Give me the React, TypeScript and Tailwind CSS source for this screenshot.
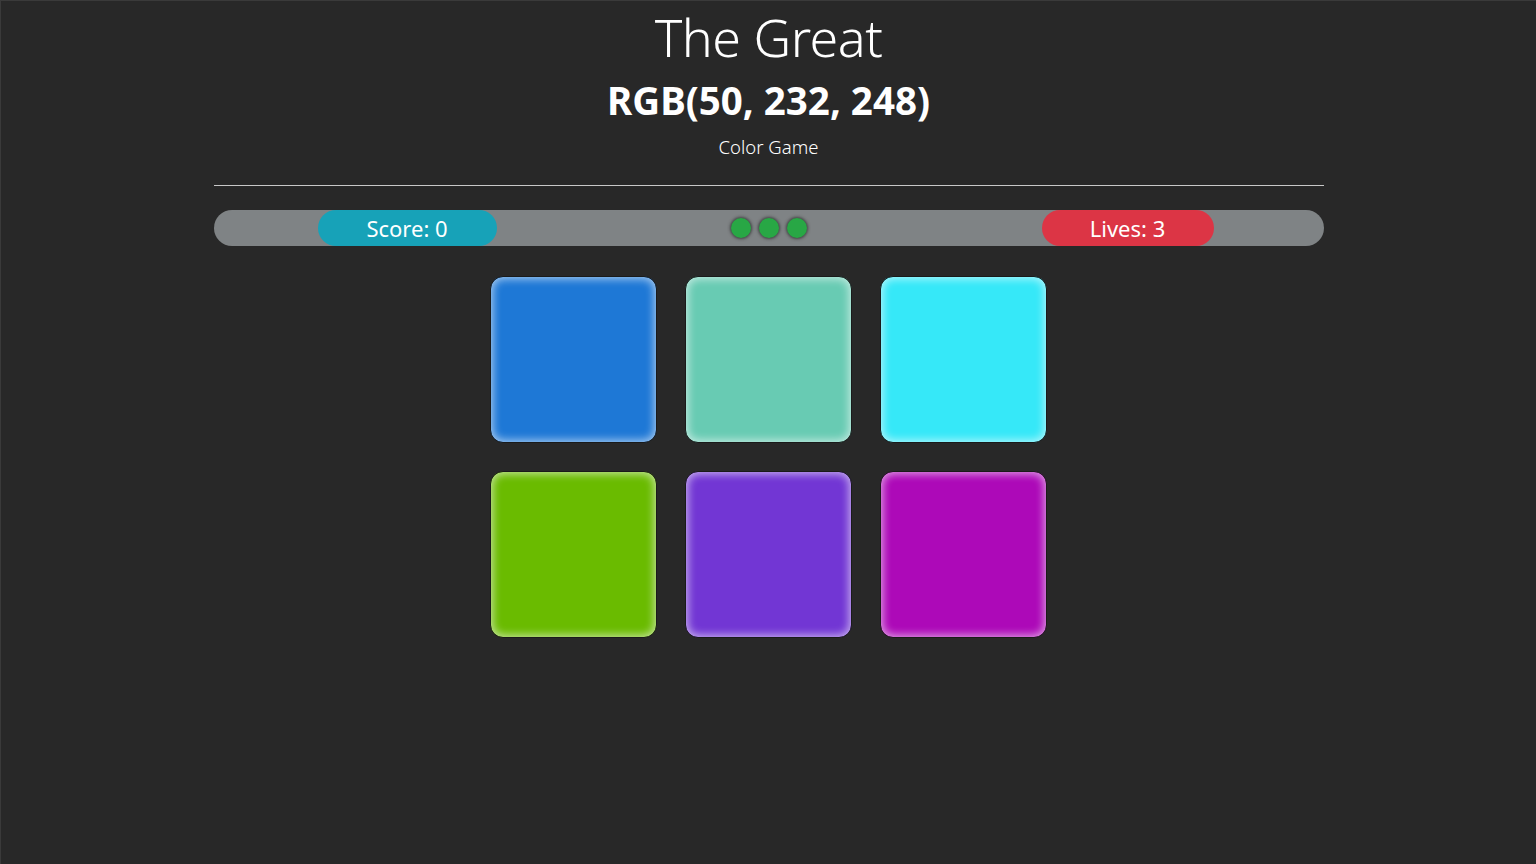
import React from 'react';

const tiles = [
  '#1e78d6',
  '#68cbb3',
  '#36e8f8',
  '#6abb00',
  '#7236d4',
  '#ad09b8',
];

export default function App() {
  return (
    <div
      className="min-h-[864px] w-full bg-[#282828] text-white border-t border-l border-[#3a3a3a]"
      style={{ fontFamily: '"Noto Sans", "Open Sans", sans-serif' }}
    >
      {/* Header */}
      <div className="flex flex-col items-center">
        <h1 className="mt-[0px] text-[52px] leading-[72px] font-light tracking-[-0.5px]">The Great</h1>
        <h2 className="mt-[-1px] text-[38.5px] leading-[56px] font-bold">RGB(50, 232, 248)</h2>
        <p className="mt-[6px] text-[18.5px] leading-[26px] font-light">Color Game</p>
      </div>

      <div className="mx-auto w-[1110px]">
        <hr className="mt-[25px] border-t border-[#c8c8c8]" />

        {/* Status bar */}
        <div className="mt-[24px] h-[36px] rounded-full bg-[#7f8385] grid grid-cols-3 items-center">
          <div className="flex">
            <div className="ml-[104px] w-[179px] h-[36px] rounded-full bg-[#17a2b8] flex items-center justify-center text-[22px]">
              Score: 0
            </div>
          </div>
          <div className="flex justify-center gap-[8px]">
            {[0, 1, 2].map((i) => (
              <span
                key={i}
                className="w-[20px] h-[20px] rounded-full bg-[#28a745] shadow-[0_0_3px_1px_rgba(40,40,40,0.7)]"
              />
            ))}
          </div>
          <div className="flex">
            <div className="ml-[88px] w-[172px] h-[36px] rounded-full bg-[#dc3545] flex items-center justify-center text-[22px]">
              Lives: 3
            </div>
          </div>
        </div>

        {/* Tiles */}
        <div className="mt-[30px] grid grid-cols-[167px_167px_167px] justify-center gap-[28px]">
          {tiles.map((c) => (
            <div
              key={c}
              className="w-[167px] h-[167px] rounded-[13px] border border-[#1a1a1a] shadow-[inset_0_0_9px_2px_rgba(255,255,255,0.6)]"
              style={{ backgroundColor: c }}
            />
          ))}
        </div>
      </div>
    </div>
  );
}
